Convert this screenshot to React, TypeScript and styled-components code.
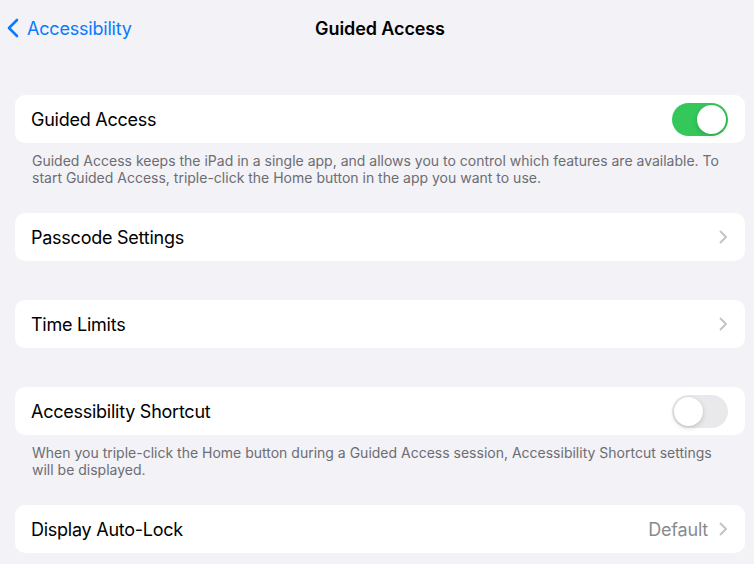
import React from 'react';
import styled, { createGlobalStyle } from 'styled-components';

const GlobalStyle = createGlobalStyle`
  html, body {
    margin: 0;
    padding: 0;
    background: #f2f2f7;
  }
  body {
    font-family: Inter, "Noto Sans", "Liberation Sans", sans-serif;
    -webkit-font-smoothing: antialiased;
  }
`;

const Page = styled.div`
  width: 754px;
  height: 564px;
  overflow: hidden;
  background: #f2f2f7;
`;

const NavBar = styled.div`
  position: relative;
  height: 56px;
  display: flex;
  align-items: center;
  justify-content: center;
`;

const BackButton = styled.div`
  position: absolute;
  left: 7px;
  top: 0;
  bottom: 0;
  display: flex;
  align-items: center;
  gap: 8px;
  color: #0a7aff;
  font-size: 18px;
  letter-spacing: -0.2px;
`;

const Title = styled.div`
  font-size: 18px;
  font-weight: 600;
  color: #000;
  letter-spacing: -0.1px;
  margin-left: 6px;
`;

const Content = styled.div`
  padding: 39px 9px 0 15px;
  display: flex;
  flex-direction: column;
`;

const Group = styled.div<{ $hasFooter?: boolean }>`
  margin-bottom: ${p => (p.$hasFooter ? 27 : 39)}px;
`;

const Card = styled.div`
  background: #fff;
  border-radius: 10px;
  height: 48px;
  display: flex;
  align-items: center;
  padding: 0 17px 0 16px;
`;

const Label = styled.div`
  flex: 1;
  font-size: 18px;
  color: #000;
  letter-spacing: -0.25px;
`;

const Value = styled.div`
  font-size: 18px;
  color: #8a8a8e;
  margin-right: 11px;
  letter-spacing: -0.2px;
`;

const Footer = styled.div`
  padding: 9px 17px 0;
  font-size: 14px;
  line-height: 17px;
  color: #6d6d72;
  letter-spacing: 0;
`;

const Track = styled.div<{ $on: boolean }>`
  position: relative;
  width: 56px;
  height: 33px;
  border-radius: 17px;
  background: ${p => (p.$on ? '#34c759' : '#e9e9eb')};
`;

const Knob = styled.div<{ $on: boolean }>`
  position: absolute;
  top: 2px;
  left: ${p => (p.$on ? '25px' : '2px')};
  width: 29px;
  height: 29px;
  border-radius: 50%;
  background: #fff;
  box-shadow: 0 2px 5px rgba(0, 0, 0, 0.15), 0 0 0 0.5px rgba(0, 0, 0, 0.06);
`;

const Toggle = ({ on }: { on: boolean }) => (
  <Track $on={on}>
    <Knob $on={on} />
  </Track>
);

const Chevron = () => (
  <svg width="9" height="14" viewBox="0 0 9 14" fill="none">
    <path d="M1.5 1.5L7 7L1.5 12.5" stroke="#c4c4c7" strokeWidth="2" strokeLinecap="round" strokeLinejoin="round" />
  </svg>
);

const BackChevron = () => (
  <svg width="12" height="20" viewBox="0 0 12 20" fill="none">
    <path d="M10 2L2 10L10 18" stroke="#0a7aff" strokeWidth="2.6" strokeLinecap="round" strokeLinejoin="round" />
  </svg>
);

export default function App() {
  return (
    <Page>
      <GlobalStyle />
      <NavBar>
        <BackButton>
          <BackChevron />
          Accessibility
        </BackButton>
        <Title>Guided Access</Title>
      </NavBar>
      <Content>
        <Group $hasFooter>
          <Card>
            <Label>Guided Access</Label>
            <Toggle on />
          </Card>
          <Footer>
            Guided Access keeps the iPad in a single app, and allows you to control which features are available. To
            start Guided Access, triple-click the Home button in the app you want to use.
          </Footer>
        </Group>
        <Group>
          <Card>
            <Label>Passcode Settings</Label>
            <Chevron />
          </Card>
        </Group>
        <Group>
          <Card>
            <Label>Time Limits</Label>
            <Chevron />
          </Card>
        </Group>
        <Group $hasFooter>
          <Card>
            <Label>Accessibility Shortcut</Label>
            <Toggle on={false} />
          </Card>
          <Footer>
            When you triple-click the Home button during a Guided Access session, Accessibility Shortcut settings
            will be displayed.
          </Footer>
        </Group>
        <Group>
          <Card>
            <Label>Display Auto-Lock</Label>
            <Value>Default</Value>
            <Chevron />
          </Card>
        </Group>
      </Content>
    </Page>
  );
}
